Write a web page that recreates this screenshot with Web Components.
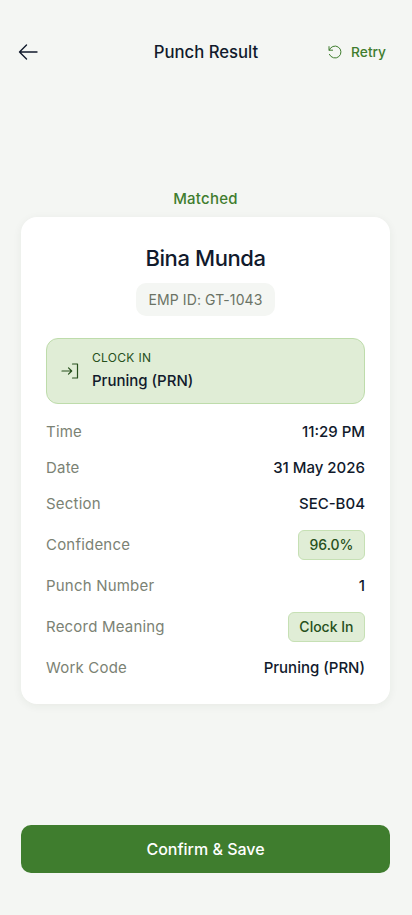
<!DOCTYPE html>
<html>
<head>
<meta charset="utf-8">
<title>Punch Result</title>
<style>
    html, body { margin: 0; padding: 0; height: 100%; }
    body { background: #f4f6f3; font-family: Inter, "Liberation Sans", sans-serif; }
</style>
</head>
<body>
<punch-screen>
    <punch-header slot="header" title="Punch Result"></punch-header>
    <punch-card slot="main" name="Bina Munda" emp="EMP ID: GT-1043" kind="CLOCK IN" work="Pruning (PRN)">
        <detail-row label="Time">11:29 PM</detail-row>
        <detail-row label="Date">31 May 2026</detail-row>
        <detail-row label="Section">SEC-B04</detail-row>
        <detail-row label="Confidence" chip>96.0%</detail-row>
        <detail-row label="Punch Number">1</detail-row>
        <detail-row label="Record Meaning" chip>Clock In</detail-row>
        <detail-row label="Work Code">Pruning (PRN)</detail-row>
    </punch-card>
    <confirm-button slot="footer">Confirm &amp; Save</confirm-button>
</punch-screen>

<script>
class PunchScreen extends HTMLElement {
    constructor() {
        super();
        this.myRoot = this.attachShadow({mode: "open"});
        this.myRoot.innerHTML = `
        <style>
            :host {
                display: flex;
                flex-direction: column;
                height: 915px;
                box-sizing: border-box;
                color: #111a2c;
            }
            .main {
                flex: 1;
                display: flex;
                flex-direction: column;
                justify-content: center;
                padding: 0 22px 8px 21px;
            }
            .status {
                text-align: center;
                font-size: 15px;
                line-height: 20px;
                font-weight: 500;
                letter-spacing: 0.25px;
                color: #3f7d2e;
                margin-bottom: 8px;
            }
            .footer {
                padding: 0 22px 42px 21px;
            }
        </style>
        <slot name="header"></slot>
        <section class="main">
            <div class="status">Matched</div>
            <slot name="main"></slot>
        </section>
        <div class="footer"><slot name="footer"></slot></div>
        `;
    }
}

class PunchHeader extends HTMLElement {
    constructor() {
        super();
        this.myRoot = this.attachShadow({mode: "open"});
        this.myRoot.innerHTML = `
        <style>
            :host {
                display: grid;
                grid-template-columns: 1fr auto 1fr;
                align-items: center;
                padding: 28px 26px 0;
                height: 48px;
            }
            svg { display: block; }
            .back { margin-left: -8px; }
            h1 {
                margin: 0;
                font-size: 16.7px;
                line-height: 24px;
                font-weight: 500;
            }
            .retry {
                justify-self: end;
                display: flex;
                align-items: center;
                gap: 8px;
                font-size: 13.75px;
                font-weight: 500;
                color: #3f7d2e;
            }
        </style>
        <svg class="back" width="20" height="20" viewBox="0 0 20 20" fill="none" stroke="#111a2c" stroke-width="1.4" stroke-linecap="round" stroke-linejoin="round"><path d="M19 10H1.5M8.5 3 1.5 10l7 7"/></svg>
        <h1>${this.getAttribute("title")}</h1>
        <div class="retry">
            <svg width="16" height="16" viewBox="0 0 16 16" fill="none" stroke="#3f7d2e" stroke-width="1" stroke-linecap="round" stroke-linejoin="round"><path d="M2 2.6v3.6h3.6"/><path d="M2.2 6.2A6 6 0 1 1 2.4 10.4"/></svg>
            <span>Retry</span>
        </div>
        `;
    }
}

class PunchCard extends HTMLElement {
    constructor() {
        super();
        this.myRoot = this.attachShadow({mode: "open"});
        this.myRoot.innerHTML = `
        <style>
            :host {
                display: block;
                background: #fff;
                border-radius: 16px;
                padding: 24px 25px 18px;
                box-shadow: 0 2px 10px rgba(30, 50, 20, 0.06);
            }
            .head {
                display: flex;
                flex-direction: column;
                align-items: center;
            }
            h2 {
                margin: 0;
                font-size: 22px;
                line-height: 34px;
                font-weight: 500;
                letter-spacing: -0.4px;
            }
            .emp {
                margin-top: 8px;
                padding: 0 13px;
                height: 33px;
                line-height: 33px;
                background: #f4f6f3;
                border-radius: 10px;
                font-size: 14px;
                font-weight: 400;
                letter-spacing: 0.1px;
                color: #6b7365;
            }
            .punch {
                display: flex;
                align-items: center;
                gap: 13px;
                margin: 22px 0 10px;
                height: 66px;
                box-sizing: border-box;
                padding: 0 14px;
                background: #e0edd6;
                border: 1px solid #bedcab;
                border-radius: 12px;
            }
            .text { padding-bottom: 2px; }
            .kind {
                font-size: 12px;
                line-height: 16px;
                font-weight: 400;
                letter-spacing: 0.3px;
                color: #27501c;
            }
            .work {
                margin-top: 6px;
                font-size: 15px;
                line-height: 18px;
                font-weight: 500;
            }
            svg { display: block; flex: none; }
        </style>
        <div class="head">
            <h2>${this.getAttribute("name")}</h2>
            <div class="emp">${this.getAttribute("emp")}</div>
        </div>
        <div class="punch">
            <svg width="18" height="18" viewBox="0 0 18 18" fill="none" stroke="#27501c" stroke-width="1.2" stroke-linecap="round" stroke-linejoin="round"><path d="M1 9h9.5M7.5 5.8 10.7 9l-3.2 3.2"/><path d="M11.5 2h5v14h-5"/></svg>
            <div class="text">
                <div class="kind">${this.getAttribute("kind")}</div>
                <div class="work">${this.getAttribute("work")}</div>
            </div>
        </div>
        <slot></slot>
        `;
    }
}

class DetailRow extends HTMLElement {
    constructor() {
        super();
        this.myRoot = this.attachShadow({mode: "open"});
        const isChip = this.hasAttribute("chip");
        this.myRoot.innerHTML = `
        <style>
            :host {
                display: flex;
                justify-content: space-between;
                align-items: center;
                padding: 8px 0;
                min-height: 20px;
            }
            .label {
                font-size: 15px;
                line-height: 20px;
                letter-spacing: 0.2px;
                color: #7b8274;
            }
            .value {
                font-size: 15px;
                line-height: 20px;
                font-weight: 500;
            }
            .chip {
                padding: 4px 10.5px;
                font-size: 14px;
                background: #e0edd6;
                border: 1px solid #c6e0b4;
                border-radius: 6px;
                color: #27501c;
            }
        </style>
        <span class="label">${this.getAttribute("label")}</span>
        <span class="value ${isChip ? "chip" : ""}"><slot></slot></span>
        `;
    }
}

class ConfirmButton extends HTMLElement {
    constructor() {
        super();
        this.myRoot = this.attachShadow({mode: "open"});
        this.myRoot.innerHTML = `
        <style>
            :host {
                display: block;
                height: 48px;
                line-height: 48px;
                text-align: center;
                background: #3f7d2e;
                border-radius: 10px;
                color: #fff;
                font-size: 16px;
                font-weight: 500;
            }
        </style>
        <slot></slot>
        `;
    }
}

customElements.define("punch-screen", PunchScreen);
customElements.define("punch-header", PunchHeader);
customElements.define("punch-card", PunchCard);
customElements.define("detail-row", DetailRow);
customElements.define("confirm-button", ConfirmButton);
</script>
</body>
</html>
